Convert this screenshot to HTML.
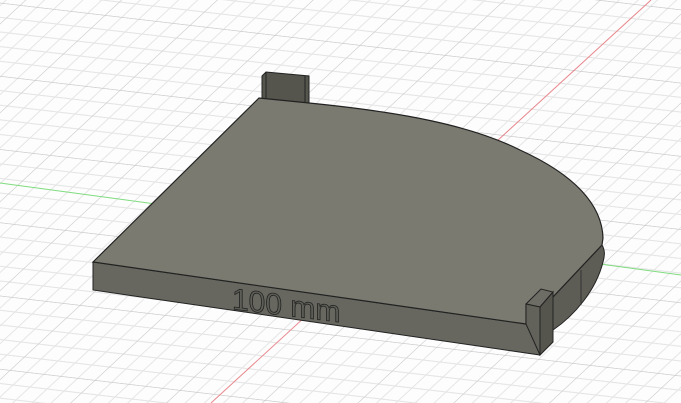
<!DOCTYPE html>
<html><head><meta charset="utf-8"><style>
html,body{margin:0;padding:0;background:#fff;}
svg{display:block;}
</style></head><body>
<svg width="681" height="403" viewBox="0 0 681 403" xmlns="http://www.w3.org/2000/svg">
<defs>
<pattern id="g" patternUnits="userSpaceOnUse" width="5" height="5" patternTransform="matrix(17,2,-14,13,20,5)">
<rect width="5" height="5" fill="#fdfdfd"/>
<g stroke="#e4e4e4" stroke-width="0.07">
<line x1="1" y1="0" x2="1" y2="5"/><line x1="2" y1="0" x2="2" y2="5"/><line x1="3" y1="0" x2="3" y2="5"/><line x1="4" y1="0" x2="4" y2="5"/>
<line y1="1" x1="0" y2="1" x2="5"/><line y1="2" x1="0" y2="2" x2="5"/><line y1="3" x1="0" y2="3" x2="5"/><line y1="4" x1="0" y2="4" x2="5"/>
</g>
<g stroke="#c8c8c8" stroke-width="0.09">
<line x1="0" y1="0" x2="0" y2="5"/><line x1="0" y1="0" x2="5" y2="0"/>
</g>
</pattern>
</defs>
<rect width="681" height="403" fill="url(#g)"/>
<line x1="0" y1="183" x2="681" y2="275" stroke="#7fdc7f" stroke-width="1"/>
<line x1="651" y1="0" x2="211" y2="403" stroke="#e8868c" stroke-width="1"/>
<polygon points="262,76 266,72 309,76 309,104 262,100" fill="#55554d" stroke="#222" stroke-width="1"/>
<line x1="266" y1="72" x2="266" y2="99" stroke="#222"/>
<line x1="305" y1="76" x2="305" y2="103" stroke="#222"/>
<path d="M553,297 L602,245 C605,250 605,255 603,262 C596,290 575,315 553,330 Z" fill="#5e5d55" stroke="#222" stroke-width="1"/>
<line x1="581" y1="270" x2="581" y2="305" stroke="#333"/>
<polygon points="93,262 526,324 540,327 540,355 93,290" fill="#676760" stroke="#222" stroke-width="1"/>
<path d="M93,262 L259,98 L309,103 C400,112 470,125 520,150 C575,175 602,205 603,238 L602,245 L553,297 L526,306 L526,324 Z" fill="#7b7a70" stroke="#222" stroke-width="1.2"/>
<polygon points="526,304 541,289 553,292 540,307" fill="#6e6d65" stroke="#222" stroke-width="1"/>
<polygon points="526,304 540,307 540,355 526,324" fill="#62625a" stroke="#222" stroke-width="1"/>
<polygon points="540,307 553,292 553,342 540,355" fill="#55554d" stroke="#222" stroke-width="1"/>
<g transform="translate(232,309) skewY(7)">
<text x="0" y="0" font-family="Liberation Sans, sans-serif" font-size="30" fill="#5e5e57" stroke="#222" stroke-width="0.8">100 mm</text>
</g>
</svg>
</body></html>
